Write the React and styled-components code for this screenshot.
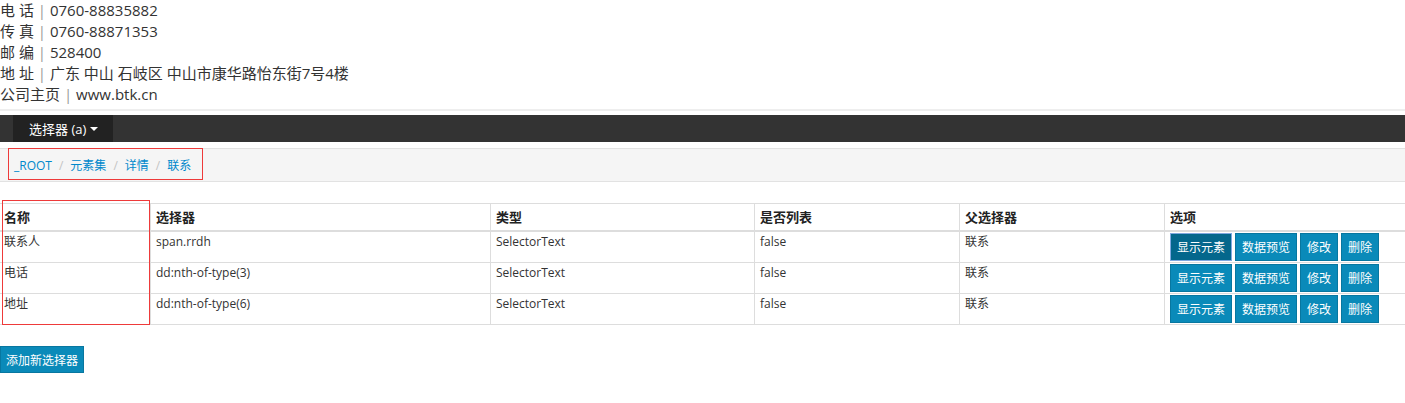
import React from "react";
import styled, { createGlobalStyle } from "styled-components";

const Global = createGlobalStyle`
  html, body { margin: 0; padding: 0; background: #fff; }
  body {
    font-family: "Open Sans", "Noto Sans CJK SC", sans-serif;
    color: #333;
  }
`;

const Page = styled.div`
  width: 1405px;
`;

const Contact = styled.div`
  font-size: 15px;
  line-height: 21px;
  color: #333;
`;

const ContactLine = styled.div`
  white-space: pre;
  height: 21px;
`;

const Pipe = styled.span`
  color: #999;
`;

const Rule = styled.div`
  height: 2px;
  background: #eee;
  margin: 4px 0;
`;

const Navbar = styled.div`
  height: 27px;
  background: #333;
  display: flex;
  padding-left: 13px;
`;

const NavItem = styled.div`
  display: flex;
  align-items: center;
  background: #222;
  color: #fff;
  font-size: 13px;
  padding: 0 15px 0 16px;
  white-space: pre;
`;

const Caret = styled.span`
  display: inline-block;
  width: 0;
  height: 0;
  margin-left: 4px;
  border-top: 4px solid #fff;
  border-left: 4px solid transparent;
  border-right: 4px solid transparent;
`;

const Breadcrumb = styled.div`
  position: relative;
  margin-top: 6px;
  height: 32px;
  background: #f5f5f5;
  border-top: 1px solid #e2e2e2;
  border-bottom: 1px solid #e2e2e2;
  display: flex;
  align-items: center;
  padding-left: 14px;
  font-size: 12px;
`;

const Crumb = styled.a`
  color: #0088cc;
  text-decoration: none;
`;

const Sep = styled.span`
  color: #c4c4c4;
  padding: 0 7px;
`;

const Highlight = styled.div`
  position: absolute;
  border: 1px solid #ee3a3a;
  box-sizing: border-box;
  pointer-events: none;
`;

const TableWrap = styled.div`
  position: relative;
  margin-top: 21px;
`;

const Table = styled.table`
  width: 100%;
  table-layout: fixed;
  border-collapse: separate;
  border-spacing: 0;
`;

const Th = styled.th`
  text-align: left;
  font-weight: bold;
  font-size: 13px;
  line-height: 18px;
  padding: 4px 5px 4px ${(p) => (p.$first ? "4px" : "5px")};
  border-top: 1px solid #ddd;
  border-bottom: 2px solid #ddd;
  border-left: ${(p) => (p.$first ? "none" : "1px solid #ddd")};
  color: #222;
`;

const Td = styled.td`
  vertical-align: top;
  font-size: 12px;
  line-height: 18px;
  height: 28px;
  padding: 1px 5px 1px ${(p) => (p.$first ? "4px" : "5px")};
  border-bottom: 1px solid #ddd;
  border-left: ${(p) => (p.$first ? "none" : "1px solid #ddd")};
  color: #333;
  white-space: nowrap;
`;

const Actions = styled.div`
  display: flex;
  gap: 3px;
`;

const Btn = styled.button`
  box-sizing: border-box;
  height: ${(p) => (p.$tall ? "27px" : "28px")};
  padding: 0 6px;
  font-family: "Noto Sans CJK SC", "Open Sans", sans-serif;
  font-size: 12px;
  line-height: 24px;
  color: #fff;
  background: ${(p) => (p.$active ? "#04678c" : "#0a8ab9")};
  border: 1px solid ${(p) => (p.$active ? "#7fa8e0" : "#0877a0")};
  border-radius: 0;
  cursor: pointer;
`;

const AddBtn = styled(Btn)`
  margin-top: 21px;
  padding: 0 5px;
  height: 27px;
  display: block;
`;

const contact = [
  ["电 话", "0760-88835882"],
  ["传 真", "0760-88871353"],
  ["邮 编", "528400"],
  ["地 址", "广东 中山 石岐区 中山市康华路怡东街7号4楼"],
  ["公司主页", "www.btk.cn"],
];

const rows = [
  ["联系人", "span.rrdh", "SelectorText", "false", "联系"],
  ["电话", "dd:nth-of-type(3)", "SelectorText", "false", "联系"],
  ["地址", "dd:nth-of-type(6)", "SelectorText", "false", "联系"],
];

const headers = ["名称", "选择器", "类型", "是否列表", "父选择器", "选项"];
const widths = [150, 340, 264, 205, 205];

export default function App() {
  return (
    <Page>
      <Global />
      <Contact>
        {contact.map(([k, v]) => (
          <ContactLine key={k}>
            {k} <Pipe>|</Pipe> {v}
          </ContactLine>
        ))}
      </Contact>
      <Rule />
      <Navbar>
        <NavItem>
          选择器 (a)
          <Caret />
        </NavItem>
      </Navbar>
      <Breadcrumb>
        <Crumb href="#">_ROOT</Crumb>
        <Sep>/</Sep>
        <Crumb href="#">元素集</Crumb>
        <Sep>/</Sep>
        <Crumb href="#">详情</Crumb>
        <Sep>/</Sep>
        <Crumb href="#">联系</Crumb>
        <Highlight style={{ left: 8, top: -1, width: 195, height: 32 }} />
      </Breadcrumb>
      <TableWrap>
        <Table>
          <colgroup>
            {widths.map((w, i) => (
              <col key={i} style={{ width: w }} />
            ))}
            <col />
          </colgroup>
          <thead>
            <tr>
              {headers.map((h, i) => (
                <Th key={h} $first={i === 0}>
                  {h}
                </Th>
              ))}
            </tr>
          </thead>
          <tbody>
            {rows.map((r, ri) => (
              <tr key={ri}>
                {r.map((c, i) => (
                  <Td key={i} $first={i === 0}>
                    {c}
                  </Td>
                ))}
                <Td>
                  <Actions>
                    <Btn $active={ri === 0}>显示元素</Btn>
                    <Btn>数据预览</Btn>
                    <Btn>修改</Btn>
                    <Btn>删除</Btn>
                  </Actions>
                </Td>
              </tr>
            ))}
          </tbody>
        </Table>
        <Highlight style={{ left: 2, top: -3, width: 148, height: 125 }} />
      </TableWrap>
      <AddBtn $tall>添加新选择器</AddBtn>
    </Page>
  );
}
